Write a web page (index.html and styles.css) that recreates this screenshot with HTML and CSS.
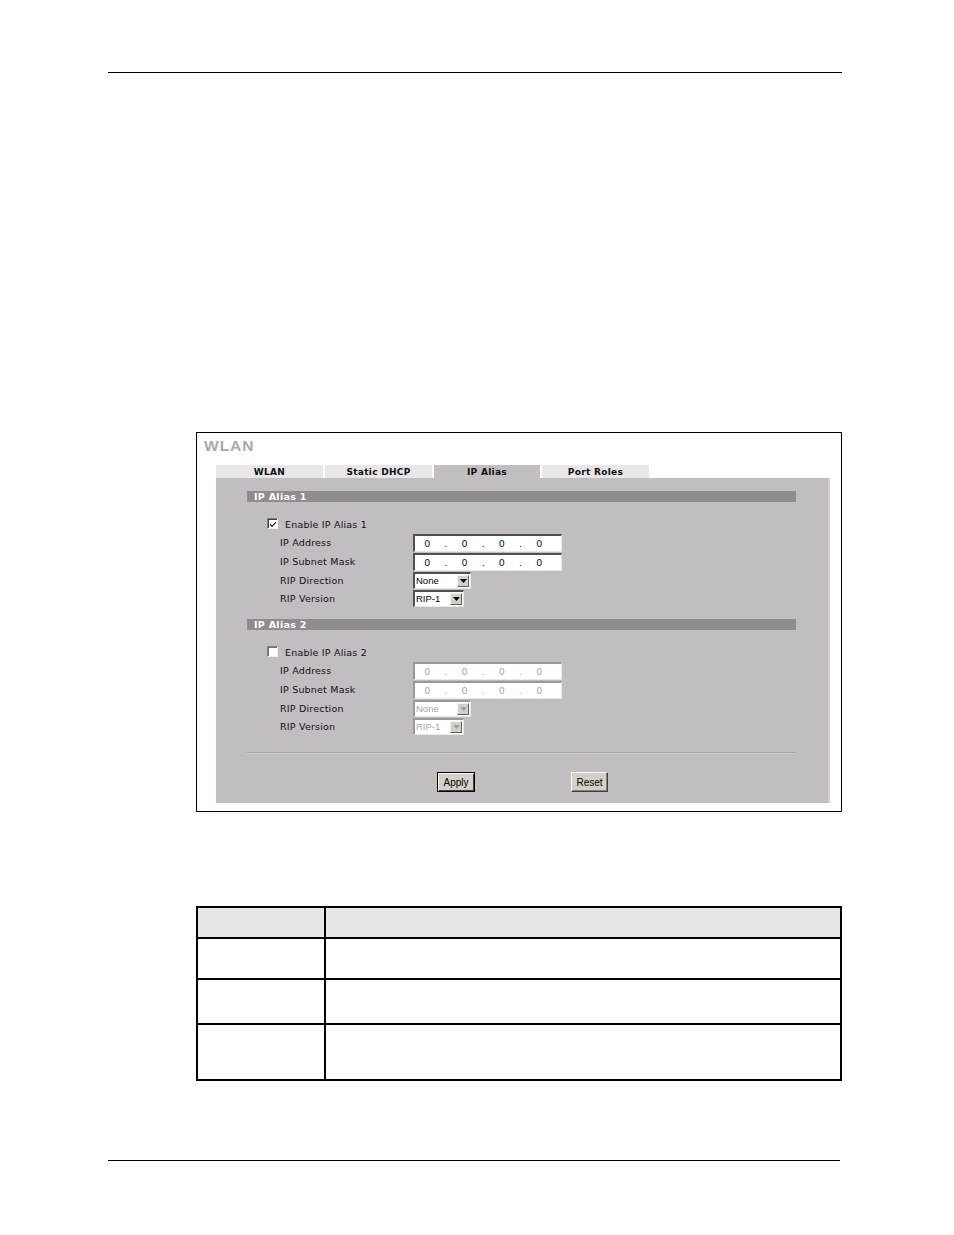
FILE: index.html
```html
<!DOCTYPE html>
<html>
<head>
<meta charset="utf-8">
<link rel="stylesheet" href="styles.css">
</head>
<body>
<div class="page">
  <div class="rule top-rule"></div>

  <div class="figure">
    <div class="fig-title">WLAN</div>
    <div class="tabs">
      <div class="tab">WLAN</div>
      <div class="tab">Static DHCP</div>
      <div class="tab active">IP Alias</div>
      <div class="tab">Port Roles</div>
    </div>
    <div class="panel">
      <div class="section">
        <div class="bar">IP Alias 1</div>
        <div class="row enable-row">
          <span class="cb"><svg width="8" height="8" viewBox="0 0 8 8"><path d="M1 3.5 L3 5.5 L7 1.5 L7 3 L3 7 L1 5 Z" fill="#000"/></svg></span>
          <span class="cb-label">Enable IP Alias 1</span>
        </div>
        <div class="row ip-row">
          <span class="label">IP Address</span>
          <span class="ipbox"><span>0</span><span>.</span><span>0</span><span>.</span><span>0</span><span>.</span><span>0</span></span>
        </div>
        <div class="row ip-row">
          <span class="label">IP Subnet Mask</span>
          <span class="ipbox"><span>0</span><span>.</span><span>0</span><span>.</span><span>0</span><span>.</span><span>0</span></span>
        </div>
        <div class="row sel-row">
          <span class="label">RIP Direction</span>
          <span class="select sel-wide"><span class="sel-text">None</span><span class="sel-btn"><svg width="7" height="4" viewBox="0 0 7 4"><path d="M0 0 H7 L3.5 4 Z" fill="#000"/></svg></span></span>
        </div>
        <div class="row sel-row">
          <span class="label">RIP Version</span>
          <span class="select sel-narrow"><span class="sel-text">RIP-1</span><span class="sel-btn"><svg width="7" height="4" viewBox="0 0 7 4"><path d="M0 0 H7 L3.5 4 Z" fill="#000"/></svg></span></span>
        </div>
      </div>

      <div class="section disabled">
        <div class="bar">IP Alias 2</div>
        <div class="row enable-row">
          <span class="cb"></span>
          <span class="cb-label">Enable IP Alias 2</span>
        </div>
        <div class="row ip-row">
          <span class="label">IP Address</span>
          <span class="ipbox"><span>0</span><span>.</span><span>0</span><span>.</span><span>0</span><span>.</span><span>0</span></span>
        </div>
        <div class="row ip-row">
          <span class="label">IP Subnet Mask</span>
          <span class="ipbox"><span>0</span><span>.</span><span>0</span><span>.</span><span>0</span><span>.</span><span>0</span></span>
        </div>
        <div class="row sel-row">
          <span class="label">RIP Direction</span>
          <span class="select sel-wide"><span class="sel-text">None</span><span class="sel-btn"><svg width="7" height="4" viewBox="0 0 7 4"><path d="M0 0 H7 L3.5 4 Z" fill="#a09ca0"/></svg></span></span>
        </div>
        <div class="row sel-row">
          <span class="label">RIP Version</span>
          <span class="select sel-narrow"><span class="sel-text">RIP-1</span><span class="sel-btn"><svg width="7" height="4" viewBox="0 0 7 4"><path d="M0 0 H7 L3.5 4 Z" fill="#a09ca0"/></svg></span></span>
        </div>
      </div>

      <div class="separator"></div>
      <div class="buttons">
        <span class="btn btn-default">Apply</span>
        <span class="btn btn-reset">Reset</span>
      </div>
    </div>
  </div>

  <table class="doc-table">
    <tr class="head"><td class="c1"></td><td class="c2"></td></tr>
    <tr class="r1"><td class="c1"></td><td class="c2"></td></tr>
    <tr class="r2"><td class="c1"></td><td class="c2"></td></tr>
    <tr class="r3"><td class="c1"></td><td class="c2"></td></tr>
  </table>

  <div class="rule bottom-rule"></div>
</div>
</body>
</html>
```

FILE: styles.css
```css
html, body {
  margin: 0;
  padding: 0;
  background: #fff;
}
.page {
  width: 954px;
  height: 1235px;
  overflow: hidden;
  font-family: "DejaVu Sans", Verdana, sans-serif;
}
.rule {
  height: 1px;
  background: #000;
}
.top-rule {
  margin: 72px 0 0 108px;
  width: 734px;
}
.bottom-rule {
  margin: 79px 0 0 108px;
  width: 732px;
}

/* ---------- figure ---------- */
.figure {
  margin: 359px 0 0 196px;
  width: 644px;
  height: 378px;
  border: 1px solid #000;
  background: #fff;
  box-sizing: content-box;
  display: flex;
  flex-direction: column;
}
.fig-title {
  margin: 3px 0 0 7px;
  height: 29px;
  font-family: "Liberation Sans", Arial, sans-serif;
  font-weight: bold;
  font-size: 15.5px;
  line-height: 20px;
  color: #a8a8a8;
  letter-spacing: 1px;
}
.tabs {
  margin-left: 19px;
  display: flex;
  gap: 2px;
  height: 13px;
}
.tab {
  width: 107px;
  height: 13px;
  background: #e8e6e8;
  font-weight: bold;
  font-size: 9px;
  line-height: 14px;
  text-align: center;
  color: #111;
  letter-spacing: 0.3px;
}
.tab:nth-child(3) { width: 106px; }
.tab.active {
  background: #c1bdc1;
}
.panel {
  margin-left: 19px;
  width: 614px;
  height: 325px;
  background: #c1bdc1;
  border-right: 2px solid #d3d0d3;
  box-sizing: border-box;
  padding: 13px 32px 0 31px;
}
.section {
  padding-bottom: 12px;
}
.bar {
  height: 11px;
  background: #8f8b8f;
  color: #fff;
  font-weight: bold;
  font-size: 9.5px;
  line-height: 12px;
  padding-left: 7px;
  letter-spacing: 0.3px;
  margin-bottom: 13px;
}
.row {
  display: flex;
  align-items: center;
  font-size: 9.5px;
  color: #111;
  letter-spacing: 0.2px;
}
.enable-row { height: 18px; padding-left: 20px; }
.ip-row { height: 19px; padding-left: 33px; }
.sel-row { height: 18px; padding-left: 33px; }
.label {
  width: 133px;
  flex: none;
}
.cb {
  width: 11px;
  height: 11px;
  box-sizing: border-box;
  background: #fff;
  border-top: 1px solid #808080;
  border-left: 1px solid #808080;
  border-right: 1px solid #f0f0f0;
  border-bottom: 1px solid #f0f0f0;
  box-shadow: inset 1px 1px 0 #404040;
  display: flex;
  align-items: center;
  justify-content: center;
  margin-top: -1px;
}
.cb-label {
  margin-left: 7px;
}
.ipbox {
  width: 149px;
  height: 18px;
  box-sizing: border-box;
  background: #fff;
  border-top: 2px solid #505050;
  border-left: 2px solid #505050;
  border-right: 1px solid #e8e8e8;
  border-bottom: 1px solid #e8e8e8;
  display: flex;
  align-items: center;
  padding-left: 3px;
  font-size: 9.5px;
  color: #111;
}
.ipbox span {
  width: 18.67px;
  text-align: center;
}
.select {
  height: 17px;
  box-sizing: border-box;
  background: #fff;
  border-top: 2px solid #505050;
  border-left: 2px solid #505050;
  border-right: 1px solid #e8e8e8;
  border-bottom: 1px solid #e8e8e8;
  display: flex;
  align-items: center;
  justify-content: space-between;
  font-family: "Liberation Sans", Arial, sans-serif;
  font-size: 9.5px;
  letter-spacing: 0;
  color: #000;
}
.sel-wide { width: 58px; }
.sel-narrow { width: 51px; }
.sel-text { padding-left: 1px; }
.sel-btn {
  width: 12px;
  height: 12px;
  box-sizing: border-box;
  background: #d4d0c8;
  border-top: 1px solid #f4f4f4;
  border-left: 1px solid #f4f4f4;
  border-right: 1px solid #606060;
  border-bottom: 1px solid #606060;
  display: flex;
  align-items: center;
  justify-content: center;
  margin-right: 1px;
}
.disabled .row,
.disabled .ipbox,
.disabled .select {
  color: #a8a4a8;
}
.disabled .row .label,
.disabled .cb-label {
  color: #111;
}
.disabled .ipbox,
.disabled .select {
  border-top-color: #9a969a;
  border-left-color: #9a969a;
}
.disabled .cb {
  box-shadow: inset 1px 1px 0 #707070;
}
.separator {
  margin-top: 5px;
  height: 1px;
  background: #a9a5a9;
  border-bottom: 1px solid #cfcccf;
}
.buttons {
  margin-top: 18px;
  display: flex;
  height: 20px;
}
.btn {
  height: 20px;
  box-sizing: border-box;
  background: #d4d0c8;
  font-family: "Liberation Sans", Arial, sans-serif;
  font-size: 10px;
  color: #000;
  display: flex;
  align-items: center;
  justify-content: center;
}
.btn-default {
  margin-left: 190px;
  width: 38px;
  border: 1px solid #000;
  box-shadow: inset 1px 1px 0 #fff, inset -1px -1px 0 #404040;
}
.btn-reset {
  margin-left: 96px;
  width: 37px;
  border-top: 1px solid #fff;
  border-left: 1px solid #fff;
  border-right: 1px solid #404040;
  border-bottom: 1px solid #404040;
  box-shadow: inset -1px -1px 0 #808080;
}

/* ---------- document table ---------- */
.doc-table {
  margin: 94px 0 0 196px;
  width: 646px;
  border-collapse: collapse;
}
.doc-table td {
  border: 2px solid #000;
  padding: 0;
}
.doc-table .c1 { width: 126px; }
.doc-table .head td { background: #e6e6e6; height: 29px; }
.doc-table .r1 td { height: 39px; }
.doc-table .r2 td { height: 43px; }
.doc-table .r3 td { height: 54px; }
```
